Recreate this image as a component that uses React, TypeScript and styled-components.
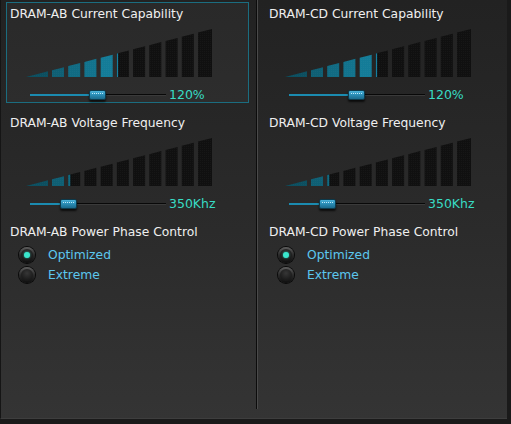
import { Fragment } from "react";
import styled, { createGlobalStyle } from "styled-components";

const GlobalStyle = createGlobalStyle`
  html, body {
    margin: 0;
    padding: 0;
    background: #1a1a1a;
  }
  body {
    font-family: "DejaVu Sans", "Liberation Sans", sans-serif;
  }
`;

// bar chart geometry: one slanted ramp cut into 11 segments
const RAMP_W = 186;
const RAMP_H = 48;
const SEGMENTS: [number, number][] = [
  [0, 22],
  [26, 38],
  [42.2, 54.2],
  [58.4, 70.4],
  [74.7, 86.7],
  [90.9, 102.9],
  [107.1, 119.1],
  [123.3, 135.3],
  [139.6, 151.6],
  [155.8, 167.8],
  [172, 186],
];
const ACTIVE = ["#0c4f60", "#0f5f74", "#116b83", "#12738d", "#147c98", "#157fa0"];

const topAt = (x: number) => RAMP_H - (RAMP_H / RAMP_W) * x;

const poly = (x0: number, x1: number) =>
  `${x0},${RAMP_H} ${x0},${topAt(x0)} ${x1},${topAt(x1)} ${x1},${RAMP_H}`;

function Ramp({ level, id }: { level: number; id: string }) {
  const full = Math.floor(level);
  const frac = level - full;
  return (
    <RampSvg width={RAMP_W} height={RAMP_H} viewBox={`0 0 ${RAMP_W} ${RAMP_H}`}>
      <defs>
        <pattern id={`dots-${id}`} width="2" height="2" patternUnits="userSpaceOnUse">
          <rect x="0" y="0" width="1" height="1" fill="rgba(255,255,255,0.025)" />
        </pattern>
      </defs>
      {SEGMENTS.map(([x0, x1], i) => {
        const on = i < full;
        return (
          <g key={i}>
            <polygon points={poly(x0, x1)} fill={on ? ACTIVE[Math.min(i, 5)] : "#101010"} />
            {i === full && frac > 0 && (
              <polygon points={poly(x0, x0 + (x1 - x0) * frac)} fill={ACTIVE[Math.min(i, 5)]} />
            )}
            <polygon points={poly(x0, x1)} fill={`url(#dots-${id})`} />
          </g>
        );
      })}
    </RampSvg>
  );
}

function Slider({ pos }: { pos: number }) {
  return (
    <Track>
      <TrackFill style={{ width: pos }} />
      <TrackRest style={{ left: pos }} />
      <Thumb style={{ left: pos - 8.5 }} />
    </Track>
  );
}

type Level = { title: string; level: number; pos: number; value: string };

function LevelSection({ item, selected, id, gap }: { item: Level; selected?: boolean; id: string; gap: number }) {
  return (
    <Section $selected={selected} $gap={gap}>
      <Title>{item.title}</Title>
      <Ramp level={item.level} id={id} />
      <SliderRow>
        <Slider pos={item.pos} />
        <Value>{item.value}</Value>
      </SliderRow>
    </Section>
  );
}

function PhaseSection({ title }: { title: string }) {
  return (
    <Section $gap={8}>
      <Title>{title}</Title>
      <Options>
        <Option>
          <Radio $checked />
          <OptionLabel>Optimized</OptionLabel>
        </Option>
        <Option>
          <Radio />
          <OptionLabel>Extreme</OptionLabel>
        </Option>
      </Options>
    </Section>
  );
}

const columns = [
  {
    key: "ab",
    pad: 5,
    width: 255,
    current: { title: "DRAM-AB Current Capability", level: 5.1, pos: 67.5, value: "120%" },
    freq: { title: "DRAM-AB Voltage Frequency", level: 2.17, pos: 38.5, value: "350Khz" },
    phase: "DRAM-AB Power Phase Control",
    selected: true,
  },
  {
    key: "cd",
    pad: 7,
    width: 249,
    current: { title: "DRAM-CD Current Capability", level: 5.1, pos: 67.5, value: "120%" },
    freq: { title: "DRAM-CD Voltage Frequency", level: 2.17, pos: 38.5, value: "350Khz" },
    phase: "DRAM-CD Power Phase Control",
    selected: false,
  },
];

export default function App() {
  return (
    <>
      <GlobalStyle />
      <Frame>
        {columns.map((c, i) => (
          <Fragment key={c.key}>
            {i > 0 && <Divider />}
            <Column $pad={c.pad} $width={c.width}>
              <LevelSection item={c.current} selected={c.selected} id={`${c.key}1`} gap={0} />
              <LevelSection item={c.freq} id={`${c.key}2`} gap={8} />
              <PhaseSection title={c.phase} />
            </Column>
          </Fragment>
        ))}
      </Frame>
    </>
  );
}

const Frame = styled.div`
  display: flex;
  width: 506px;
  height: 418px;
  border-left: 1px solid #151515;
  border-bottom: 1px solid #3e3e3e;
  background: linear-gradient(180deg, #222222 0%, #2b2b2b 55%, #343434 100%);
`;

const Column = styled.div<{ $pad: number; $width: number }>`
  display: flex;
  flex-direction: column;
  width: ${(p) => p.$width}px;
  box-sizing: border-box;
  padding: 2px 0 0 ${(p) => p.$pad}px;
`;

const Divider = styled.div`
  width: 1px;
  height: 409px;
  background: #0c0c0c;
  border-right: 1px solid #4a4a4a;
`;

const Section = styled.div<{ $selected?: boolean; $gap: number }>`
  display: flex;
  flex-direction: column;
  width: 243px;
  box-sizing: border-box;
  margin-top: ${(p) => p.$gap}px;
  padding: 3px 3px 1px 3px;
  border: 1px solid ${(p) => (p.$selected ? "#1b6d80" : "transparent")};
  background: ${(p) => (p.$selected ? "rgba(255,255,255,0.035)" : "transparent")};
`;

const Title = styled.div`
  font-size: 12.3px;
  line-height: 16px;
  height: 16px;
  color: #efefef;
  white-space: nowrap;
`;

const RampSvg = styled.svg`
  display: block;
  margin: 7px 0 0 16px;
`;

const SliderRow = styled.div`
  display: flex;
  align-items: center;
  height: 12px;
  margin: 12px 0 0 20px;
`;

const Track = styled.div`
  position: relative;
  width: 136px;
  height: 12px;
`;

const TrackFill = styled.div`
  position: absolute;
  left: 0;
  top: 5px;
  height: 2px;
  background: #1b8bb0;
`;

const TrackRest = styled.div`
  position: absolute;
  right: 0;
  top: 5px;
  height: 1px;
  background: #080808;
  border-bottom: 1px solid #3a3a3a;
`;

const Thumb = styled.div`
  position: absolute;
  top: 1px;
  width: 17px;
  height: 10px;
  box-sizing: border-box;
  border: 1px solid #0c3a4c;
  border-radius: 2px;
  background: linear-gradient(180deg, #4cb3da 0%, #2b8fb8 45%, #1a6a8c 100%);
  box-shadow: 0 2px 2px rgba(0, 0, 0, 0.7);

  &::after {
    content: "";
    position: absolute;
    left: 2px;
    right: 2px;
    top: 2px;
    height: 1px;
    background: repeating-linear-gradient(90deg, #bfe8f7 0 1px, transparent 1px 2px);
  }
`;

const Value = styled.span`
  margin-left: 3px;
  font-size: 12.5px;
  line-height: 12px;
  color: #38dcc4;
  white-space: nowrap;
`;

const Options = styled.div`
  display: flex;
  flex-direction: column;
  margin-top: 5px;
`;

const Option = styled.div`
  display: flex;
  align-items: center;
  height: 20px;
`;

const Radio = styled.span<{ $checked?: boolean }>`
  position: relative;
  width: 16px;
  height: 16px;
  margin-left: 9px;
  box-sizing: border-box;
  border-radius: 50%;
  background: linear-gradient(180deg, #5e5e5e 0%, #2a2a2a 50%, #0e0e0e 100%);
  box-shadow: 0 0 0 1px #0a0a0a;

  &::before {
    content: "";
    position: absolute;
    inset: 2px;
    border-radius: 50%;
    background: radial-gradient(circle at 50% 35%, #363636 0%, #1a1a1a 70%);
  }

  &::after {
    content: "";
    display: ${(p) => (p.$checked ? "block" : "none")};
    position: absolute;
    left: 5px;
    top: 5px;
    width: 6px;
    height: 6px;
    border-radius: 50%;
    background: #3ae6cc;
    box-shadow: 0 0 2px #1fae9c;
  }
`;

const OptionLabel = styled.span`
  margin-left: 13px;
  font-size: 12.3px;
  line-height: 16px;
  color: #5cc7ef;
`;
